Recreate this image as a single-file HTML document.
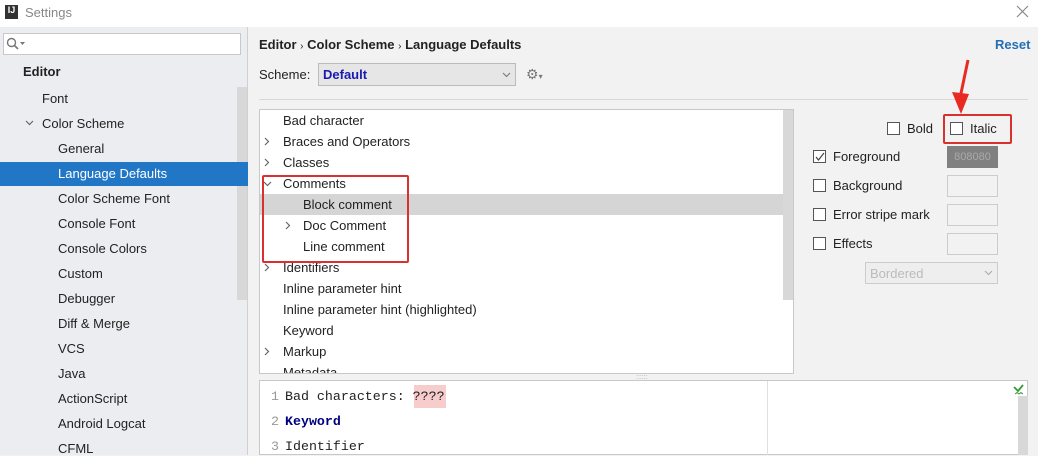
<!DOCTYPE html>
<html><head><meta charset="utf-8"><style>
*{box-sizing:border-box;margin:0;padding:0}
body{width:1038px;height:455px;overflow:hidden;background:#f2f2f2;font-family:"Liberation Sans","Noto Sans CJK SC",sans-serif;font-size:13px;color:#222;position:relative}
.a{position:absolute;white-space:nowrap}
.cb{position:absolute;width:13px;height:13px;border:1px solid #555;background:#fff}
.sw{position:absolute;width:51px;height:22px;border:1px solid #ccc;background:#f2f2f2}
.ch{position:absolute}
.m{font-family:'Liberation Mono',monospace;font-size:13.3px}
</style></head><body>
<div class="a" style="left:0;top:0;width:1038px;height:27px;background:#fff"></div>
<div class="a" style="left:5px;top:5px;width:13px;height:14px;background:#333;color:#fff;font:bold 9px 'Liberation Sans';text-align:center;line-height:11px">IJ</div>
<div class="a" style="left:25px;top:5px;color:#888;font-size:13px">Settings</div>
<svg class="a" style="left:1016px;top:5px" width="13" height="13"><path d="M1 1L12 12M12 1L1 12" stroke="#888" stroke-width="1.2"/></svg>

<div class="a" style="left:0;top:27px;width:248px;height:428px;background:#ebedf0;border-right:1px solid #d0d0d0"></div>
<div class="a" style="left:3px;top:33px;width:238px;height:22px;background:#fff;border:1px solid #c8c8c8"></div>
<svg class="a" style="left:6px;top:37px" width="20" height="14"><circle cx="5.5" cy="5.5" r="4" fill="none" stroke="#777" stroke-width="1.4"/><path d="M8.5 8.5L12 12" stroke="#777" stroke-width="1.6"/><path d="M14 5h5l-2.5 3z" fill="#777"/></svg>
<div class="a" style="left:237px;top:87px;width:10px;height:213px;background:#d8d8d8"></div>
<div class="a" style="left:23px;top:64px;font-weight:bold">Editor</div>
<div class="a" style="left:42px;top:91px">Font</div>
<svg class="ch" style="left:25px;top:120px" width="9" height="6"><path d="M1 1l3.5 3.5L8 1" fill="none" stroke="#666" stroke-width="1.2"/></svg>
<div class="a" style="left:42px;top:116px">Color Scheme</div>
<div class="a" style="left:58px;top:141px">General</div>
<div class="a" style="left:0;top:162px;width:248px;height:24px;background:#2177c6"></div>
<div class="a" style="left:58px;top:166px;color:#fff">Language Defaults</div>
<div class="a" style="left:58px;top:191px">Color Scheme Font</div>
<div class="a" style="left:58px;top:216px">Console Font</div>
<div class="a" style="left:58px;top:241px">Console Colors</div>
<div class="a" style="left:58px;top:266px">Custom</div>
<div class="a" style="left:58px;top:291px">Debugger</div>
<div class="a" style="left:58px;top:316px">Diff &amp; Merge</div>
<div class="a" style="left:58px;top:341px">VCS</div>
<div class="a" style="left:58px;top:366px">Java</div>
<div class="a" style="left:58px;top:391px">ActionScript</div>
<div class="a" style="left:58px;top:416px">Android Logcat</div>
<div class="a" style="left:58px;top:441px">CFML</div>

<div class="a" style="left:259px;top:37px;font-weight:bold">Editor <span style="font-weight:normal;font-size:10px">›</span> Color Scheme <span style="font-weight:normal;font-size:10px">›</span> Language Defaults</div>
<div class="a" style="left:995px;top:37px;font-weight:bold;color:#2470b3">Reset</div>
<div class="a" style="left:259px;top:67px">Scheme:</div>
<div class="a" style="left:318px;top:63px;width:198px;height:23px;background:#e6e6e6;border:1px solid #bbb"></div>
<div class="a" style="left:323px;top:67px;font-weight:bold;color:#1a1ab0">Default</div>
<svg class="ch" style="left:502px;top:72px" width="9" height="6"><path d="M1 1l3.5 3.5L8 1" fill="none" stroke="#777" stroke-width="1.1"/></svg>
<div class="a" style="left:526px;top:66px;color:#777;font-size:14px">⚙<span style="font-size:8px">▾</span></div>
<div class="a" style="left:259px;top:99px;width:769px;height:1px;background:#d8d8d8"></div>

<div class="a" style="left:259px;top:109px;width:535px;height:265px;background:#fff;border:1px solid #c8c8c8"></div>
<div class="a" style="left:783px;top:110px;width:10px;height:190px;background:#d8d8d8"></div>
<div class="a" style="left:260px;top:194px;width:523px;height:21px;background:#d5d5d5"></div>
<div class="a" style="left:283px;top:113px">Bad character</div>
<svg class="ch" style="left:264px;top:137px" width="6" height="9"><path d="M1 1l3.5 3.5L1 8" fill="none" stroke="#666" stroke-width="1.2"/></svg><div class="a" style="left:283px;top:134px">Braces and Operators</div>
<svg class="ch" style="left:264px;top:158px" width="6" height="9"><path d="M1 1l3.5 3.5L1 8" fill="none" stroke="#666" stroke-width="1.2"/></svg><div class="a" style="left:283px;top:155px">Classes</div>
<svg class="ch" style="left:263px;top:181px" width="9" height="6"><path d="M1 1l3.5 3.5L8 1" fill="none" stroke="#666" stroke-width="1.2"/></svg><div class="a" style="left:283px;top:176px">Comments</div>
<div class="a" style="left:303px;top:197px">Block comment</div>
<svg class="ch" style="left:285px;top:221px" width="6" height="9"><path d="M1 1l3.5 3.5L1 8" fill="none" stroke="#666" stroke-width="1.2"/></svg><div class="a" style="left:303px;top:218px">Doc Comment</div>
<div class="a" style="left:303px;top:239px">Line comment</div>
<svg class="ch" style="left:264px;top:263px" width="6" height="9"><path d="M1 1l3.5 3.5L1 8" fill="none" stroke="#666" stroke-width="1.2"/></svg><div class="a" style="left:283px;top:260px">Identifiers</div>
<div class="a" style="left:283px;top:281px">Inline parameter hint</div>
<div class="a" style="left:283px;top:302px">Inline parameter hint (highlighted)</div>
<div class="a" style="left:283px;top:323px">Keyword</div>
<svg class="ch" style="left:264px;top:347px" width="6" height="9"><path d="M1 1l3.5 3.5L1 8" fill="none" stroke="#666" stroke-width="1.2"/></svg><div class="a" style="left:283px;top:344px">Markup</div>
<div class="a" style="left:283px;top:365px;height:8px;overflow:hidden">Metadata</div>
<div class="a" style="left:262px;top:175px;width:147px;height:88px;border:2px solid #d9322e;border-radius:2px"></div>

<div class="cb" style="left:887px;top:122px"></div><div class="a" style="left:907px;top:121px">Bold</div>
<div class="cb" style="left:950px;top:122px"></div><div class="a" style="left:970px;top:121px">Italic</div>
<div class="a" style="left:943px;top:114px;width:69px;height:30px;border:2px solid #d9322e;border-radius:2px"></div>
<svg class="a" style="left:948px;top:58px" width="26" height="58"><path d="M20 2 L12 40" stroke="#e82a22" stroke-width="3"/><path d="M4 34 L13 56 L21 36 Z" fill="#e82a22"/></svg>
<div class="cb" style="left:813px;top:150px"></div>
<svg class="a" style="left:815px;top:152px" width="10" height="10"><path d="M1 5l2.5 3L9 1" fill="none" stroke="#444" stroke-width="1.2"/></svg>
<div class="a" style="left:833px;top:149px">Foreground</div>
<div class="a" style="left:947px;top:146px;width:51px;height:22px;background:#808080;color:#aaa;font-size:11px;text-align:center;line-height:22px">808080</div>
<div class="cb" style="left:813px;top:179px"></div><div class="a" style="left:833px;top:178px">Background</div><div class="sw" style="left:947px;top:175px"></div>
<div class="cb" style="left:813px;top:208px"></div><div class="a" style="left:833px;top:207px">Error stripe mark</div><div class="sw" style="left:947px;top:204px"></div>
<div class="cb" style="left:813px;top:237px"></div><div class="a" style="left:833px;top:236px">Effects</div><div class="sw" style="left:947px;top:233px"></div>
<div class="a" style="left:865px;top:262px;width:133px;height:22px;border:1px solid #ccc;background:#eee;color:#bbb;padding:3px 0 0 4px">Bordered</div>
<svg class="ch" style="left:984px;top:270px" width="9" height="6"><path d="M1 1l3.5 3.5L8 1" fill="none" stroke="#aaa" stroke-width="1.1"/></svg>

<div class="a" style="left:636px;top:374px;color:#aaa;font-size:7px">::::::</div>
<div class="a" style="left:259px;top:380px;width:769px;height:75px;background:#fff;border:1px solid #c8c8c8"></div>
<div class="a" style="left:767px;top:381px;width:1px;height:74px;background:#e0e0e0"></div>
<div class="a" style="left:1018px;top:396px;width:10px;height:59px;background:#d8d8d8"></div>
<svg class="a" style="left:1013px;top:384px" width="11" height="12"><path d="M1 3l4 4 5-6" fill="none" stroke="#3a9a3a" stroke-width="1.8"/><path d="M2 10l2-1.5 2 1.5 2-1.5 2 1.5" fill="none" stroke="#3a9a3a" stroke-width="1"/></svg>
<div class="a" style="left:414px;top:385px;width:32px;height:23px;background:#f7cccc"></div>
<div class="a m" style="left:271px;top:389px;color:#999">1</div>
<div class="a m" style="left:285px;top:389px">Bad characters: ????</div>
<div class="a m" style="left:271px;top:414px;color:#999">2</div>
<div class="a m" style="left:285px;top:414px;font-weight:bold;color:#000080">Keyword</div>
<div class="a m" style="left:271px;top:439px;color:#999">3</div>
<div class="a m" style="left:285px;top:439px">Identifier</div>
</body></html>
